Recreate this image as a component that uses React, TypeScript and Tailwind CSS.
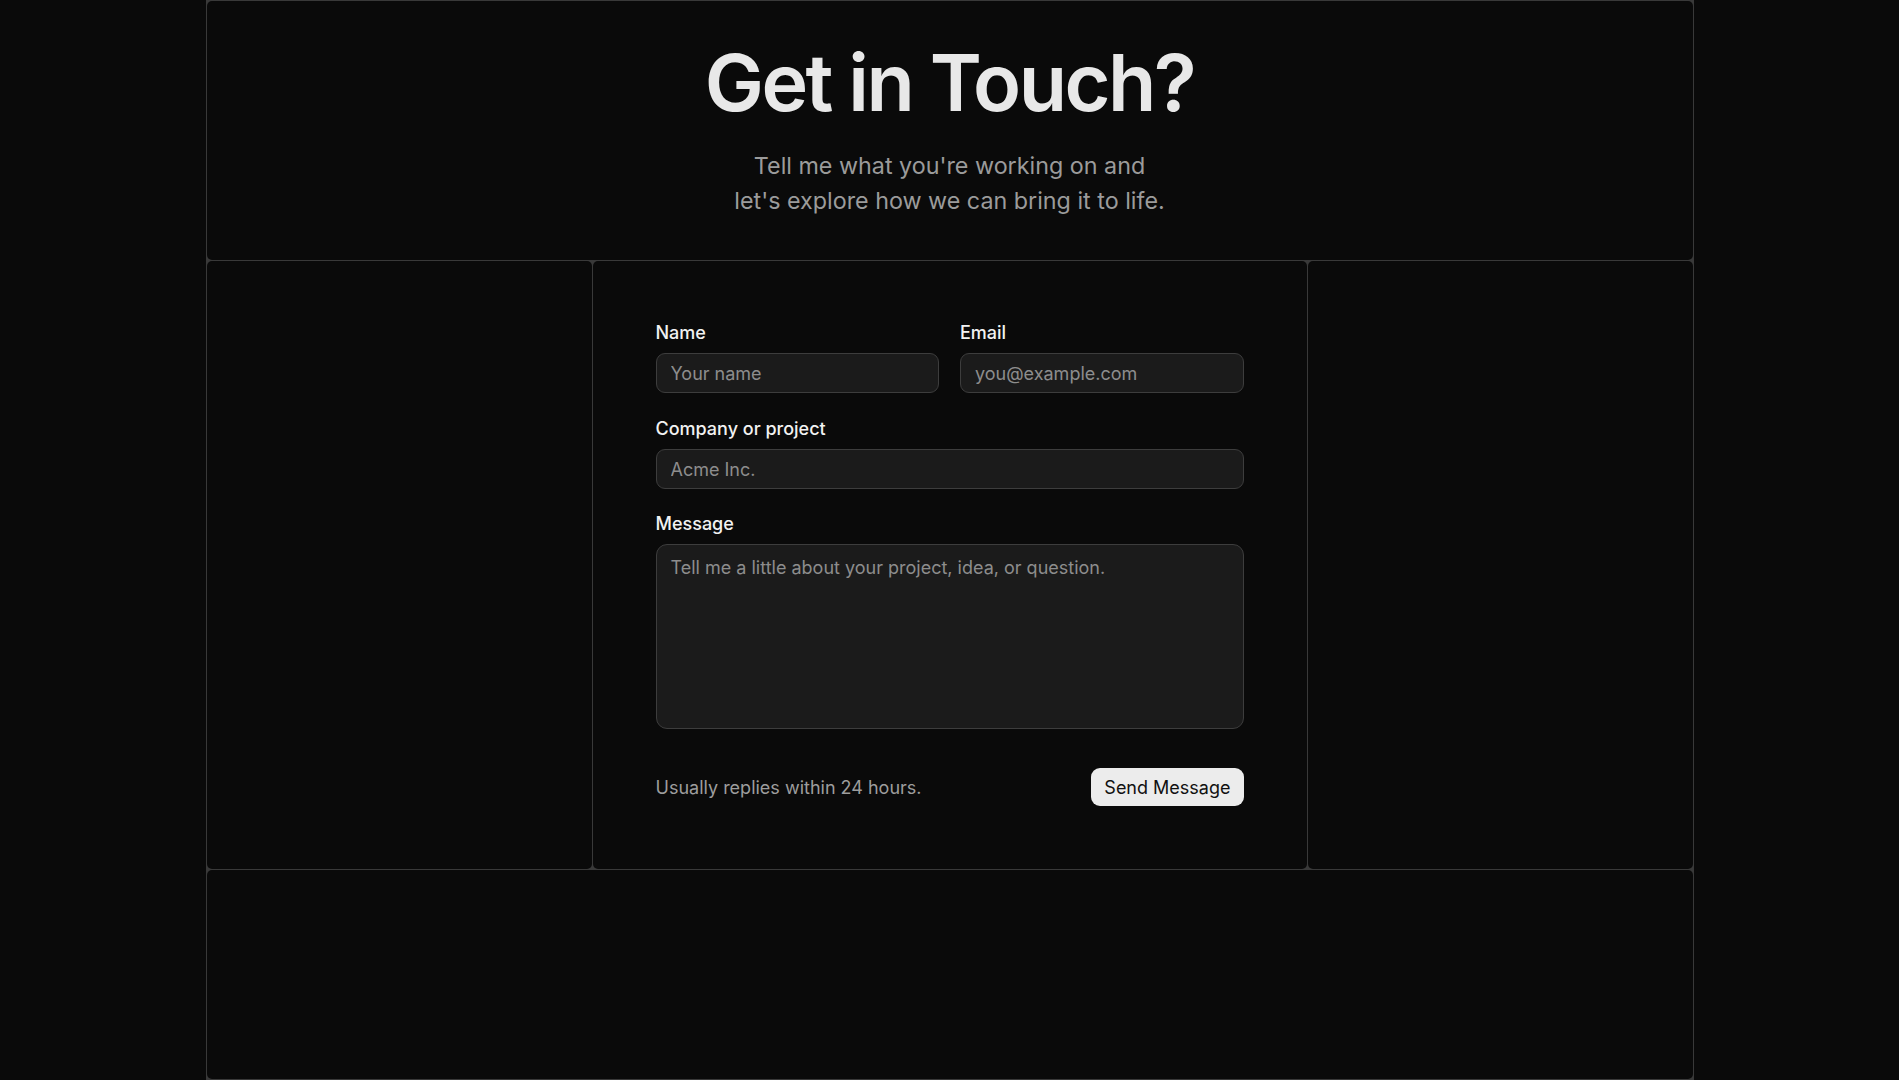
import { useState } from 'react';

const inputClass =
  'h-10 w-full rounded-[9px] border border-[#3d3d3d] bg-[#1b1b1b] px-[14px] text-[18px] text-[#ececec] placeholder:text-[#8d8d8d] outline-none focus:border-[#5a5a5a]';

export default function App() {
  const [form, setForm] = useState({ name: '', email: '', company: '', message: '' });

  const update = (key: keyof typeof form) => (e: React.ChangeEvent<HTMLInputElement | HTMLTextAreaElement>) =>
    setForm({ ...form, [key]: e.target.value });

  return (
    <div className="min-h-screen bg-[#0a0a0a]" style={{ fontFamily: 'Inter, "Noto Sans", sans-serif' }}>
      <div className="mx-auto grid min-h-screen w-[1488px] grid-cols-[385px_714px_385px] grid-rows-[259px_608px_1fr] gap-px bg-[#393939] p-px">
        {/* header */}
        <div className="col-span-3 flex flex-col items-center rounded-[5px] bg-[#0a0a0a] pt-[42px]">
          <h1 className="text-[79px] font-semibold leading-none tracking-[-0.032em] text-[#e8e8e8]">Get in Touch?</h1>
          <p className="mt-[26px] text-center text-[23.3px] leading-[35px] text-[#9b9b9b]">
            Tell me what you're working on and
            <br />
            let's explore how we can bring it to life.
          </p>
        </div>

        <div className="rounded-[5px] bg-[#0a0a0a]" />

        {/* contact form */}
        <div className="rounded-[5px] bg-[#0a0a0a] px-[63px] pt-[60px]">
          <form className="flex flex-col" onSubmit={(e) => e.preventDefault()}>
            <div className="grid grid-cols-2 gap-[21px]">
              <label className="flex flex-col gap-2">
                <span className="text-[18px] font-medium leading-6 text-[#f2f2f2]">Name</span>
                <input className={inputClass} placeholder="Your name" value={form.name} onChange={update('name')} />
              </label>
              <label className="flex flex-col gap-2">
                <span className="text-[18px] font-medium leading-6 text-[#f2f2f2]">Email</span>
                <input className={inputClass} placeholder="you@example.com" value={form.email} onChange={update('email')} />
              </label>
            </div>

            <label className="mt-6 flex flex-col gap-2">
              <span className="text-[18px] font-medium leading-6 text-[#f2f2f2]">Company or project</span>
              <input className={inputClass} placeholder="Acme Inc." value={form.company} onChange={update('company')} />
            </label>

            <label className="mt-[23px] flex flex-col gap-2">
              <span className="text-[18px] font-medium leading-6 text-[#f2f2f2]">Message</span>
              <textarea
                className="h-[185px] w-full resize-none rounded-[11px] border border-[#3d3d3d] bg-[#1b1b1b] px-[14px] py-[11px] text-[18px] leading-6 text-[#ececec] placeholder:text-[#8d8d8d] outline-none"
                placeholder="Tell me a little about your project, idea, or question."
                value={form.message}
                onChange={update('message')}
              />
            </label>

            <div className="mt-[39px] flex items-center justify-between">
              <span className="text-[18px] text-[#9d9d9d]">Usually replies within 24 hours.</span>
              <button
                type="submit"
                className="h-[38px] rounded-[9px] bg-[#ececec] px-[13px] text-[18px] font-normal text-[#111111] hover:bg-white"
              >
                Send Message
              </button>
            </div>
          </form>
        </div>

        <div className="rounded-[5px] bg-[#0a0a0a]" />

        <div className="col-span-3 rounded-[5px] bg-[#0a0a0a]" />
      </div>
    </div>
  );
}
